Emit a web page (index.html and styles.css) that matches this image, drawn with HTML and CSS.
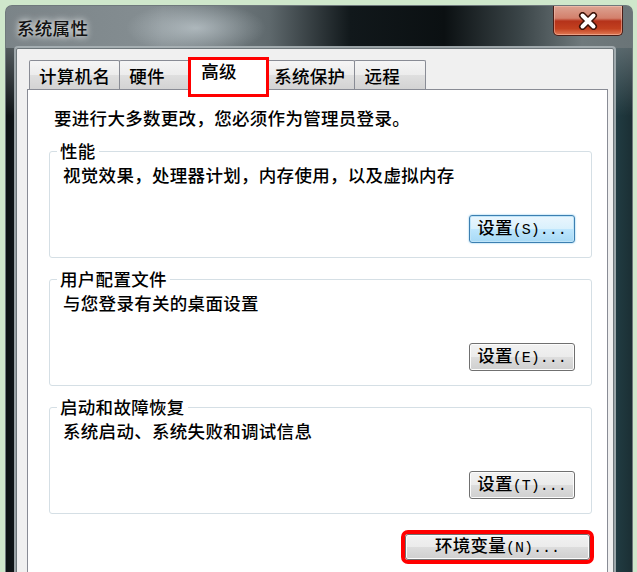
FILE: index.html
```html
<!DOCTYPE html>
<html lang="zh-CN">
<head>
  <meta charset="UTF-8" />
  <meta name="viewport" content="width=device-width, initial-scale=1.0"/>
  <title>系统属性</title>
  <link rel="stylesheet" href="styles.css">
</head>
<body>

  <div class="window">
    <div class="titlebar">
      <span class="title">系统属性</span>
      <button class="close-btn" aria-label="关闭">
        <svg width="22" height="18" viewBox="0 0 22 18">
          <path d="M5.5 3.5 L16.5 14.5 M16.5 3.5 L5.5 14.5" stroke="#3b1208" stroke-width="7" stroke-linecap="round" fill="none"/>
          <path d="M5.5 3.5 L16.5 14.5 M16.5 3.5 L5.5 14.5" stroke="#fff" stroke-width="4" stroke-linecap="round" fill="none"/>
        </svg>
      </button>
    </div>

    <div class="client">
      <div class="tabs">
        <div class="tab">计算机名</div>
        <div class="tab">硬件</div>
        <div class="tab active">高级<span class="mark"></span></div>
        <div class="tab">系统保护</div>
        <div class="tab">远程</div>
      </div>

      <div class="panel">
        <p class="note">要进行大多数更改，您必须作为管理员登录。</p>

        <fieldset class="group">
          <legend>性能</legend>
          <p class="desc">视觉效果，处理器计划，内存使用，以及虚拟内存</p>
          <div class="actions">
            <button class="btn focused">设置<span class="key">(S)...</span></button>
          </div>
        </fieldset>

        <fieldset class="group">
          <legend>用户配置文件</legend>
          <p class="desc">与您登录有关的桌面设置</p>
          <div class="actions">
            <button class="btn">设置<span class="key">(E)...</span></button>
          </div>
        </fieldset>

        <fieldset class="group">
          <legend>启动和故障恢复</legend>
          <p class="desc">系统启动、系统失败和调试信息</p>
          <div class="actions">
            <button class="btn">设置<span class="key">(T)...</span></button>
          </div>
        </fieldset>

        <div class="actions env">
          <button class="btn wide marked">环境变量<span class="key">(N)...</span></button>
        </div>
      </div>
    </div>
  </div>

</body>
</html>
```

FILE: styles.css
```css
body {
  margin: 0;
  height: 572px;
  overflow: hidden;
  background: #cfe7cb;
  color: #000;
  font-family: "Noto Sans CJK SC", "Noto Sans", sans-serif;
  font-size: 17.5px;
  font-weight: 500;
  letter-spacing: 0.3px;
}

.window {
  margin: 5px 4px 0 5px;
  height: 640px;
  border: 1px solid #6f787c;
  border-bottom: 0;
  border-radius: 7px 7px 0 0;
  background:
    linear-gradient(#7c8589 0, rgba(124, 133, 137, 0) 110px),
    linear-gradient(90deg, #0c1113 0%, #161c1f 3%, #2b3336 50%, #24434a 96%, #1b2f34 100%);
}

.titlebar {
  display: flex;
  align-items: flex-start;
  height: 42px;
  padding-left: 11px;
  border-radius: 6px 6px 0 0;
  background:
    radial-gradient(ellipse 70px 26px at 190px 22px, rgba(225, 235, 240, 0.5), transparent),
    linear-gradient(90deg, #7b8488 0%, #858e92 25%, #5f696d 42%, #11181b 55%, #0b1012 70%, #3a4447 82%, #6f797c 92%, #6a7477 100%);
}

.title {
  margin-top: 12px;
  line-height: 20px;
  color: #111;
  text-shadow: 0 0 6px rgba(255, 255, 255, 0.85), 0 0 10px rgba(255, 255, 255, 0.6);
}

.close-btn {
  margin-left: auto;
  margin-right: 9px;
  width: 70px;
  height: 30px;
  padding: 0;
  border: 1px solid #4a1d16;
  border-top: 0;
  border-radius: 0 0 5px 5px;
  background: linear-gradient(#dca392 0%, #d3806c 42%, #b5321a 52%, #c2401f 78%, #e07a55 100%);
  box-shadow: inset 0 0 0 1px rgba(255, 210, 195, 0.45);
  display: flex;
  align-items: center;
  justify-content: center;
}

.client {
  margin: 0 18px 0 10px;
  height: 600px;
  padding: 8px 5px 0 10px;
  border: 1px solid #6e777b;
  border-radius: 2px 2px 0 0;
  background: #f0f0f0;
  box-shadow: 0 0 0 2px rgba(170, 178, 182, 0.9);
}

.tabs {
  display: flex;
  align-items: flex-end;
  margin-left: 2px;
}

.tab {
  box-sizing: border-box;
  height: 29px;
  min-width: 72px;
  padding: 5px 9px 0;
  line-height: 20px;
  border: 1px solid #898c95;
  border-bottom: 0;
  border-radius: 2px 2px 0 0;
  background: linear-gradient(#f5f5f5 0%, #ececec 50%, #dfdfdf 50%, #d3d3d3 100%);
}

.tab + .tab {
  margin-left: -1px;
}

.tab.active {
  position: relative;
  z-index: 1;
  height: 33px;
  margin: 0 -2px -1px;
  padding: 3px 11px 0;
  min-width: 78px;
  background: #fff;
}

.mark {
  position: absolute;
  left: -2px;
  right: -3px;
  top: -1px;
  bottom: -7px;
  border: 3px solid #f00;
}

.panel {
  height: 520px;
  padding: 18px 15px 0 21px;
  border: 1px solid #898c95;
  background: #fff;
}

.note {
  margin: 0 0 0 5px;
  line-height: 20px;
}

.group {
  margin: 13px 0 0;
  min-width: 0;
  padding: 0 16px 14px 13px;
  border: 1px solid #d5dfe5;
  border-radius: 3px;
}

.group + .group {
  margin-top: 11px;
}

.group legend {
  margin-left: -6px;
  padding: 0 3px;
  line-height: 20px;
}

.desc {
  margin: 4px 0 0;
  line-height: 20px;
}

.actions {
  display: flex;
  justify-content: flex-end;
  margin-top: 30px;
}

.actions.env {
  margin: 20px 2px 0 0;
}

.btn {
  width: 106px;
  height: 28px;
  padding: 0;
  border: 1px solid #707070;
  border-radius: 3px;
  background: linear-gradient(#f2f2f2 0%, #ebebeb 50%, #dddddd 50%, #cfcfcf 100%);
  box-shadow: inset 0 0 0 1px #fcfcfc;
  color: #000;
  font: inherit;
  letter-spacing: inherit;
  line-height: 20px;
}

.btn.focused {
  border-color: #3c7fb1;
  background: linear-gradient(#eaf6fd 0%, #d9f0fc 50%, #bee6fd 50%, #a7d9f5 100%);
  box-shadow: inset 0 0 0 1px #bfe4f8, 0 0 2px #6fbde8;
}

.btn.wide {
  width: 185px;
  height: 26px;
}

.btn.marked {
  outline: 4px solid #f00;
}

.key {
  font-family: "Liberation Mono", monospace;
  font-size: 15px;
  font-weight: 400;
  letter-spacing: 0;
}
```
